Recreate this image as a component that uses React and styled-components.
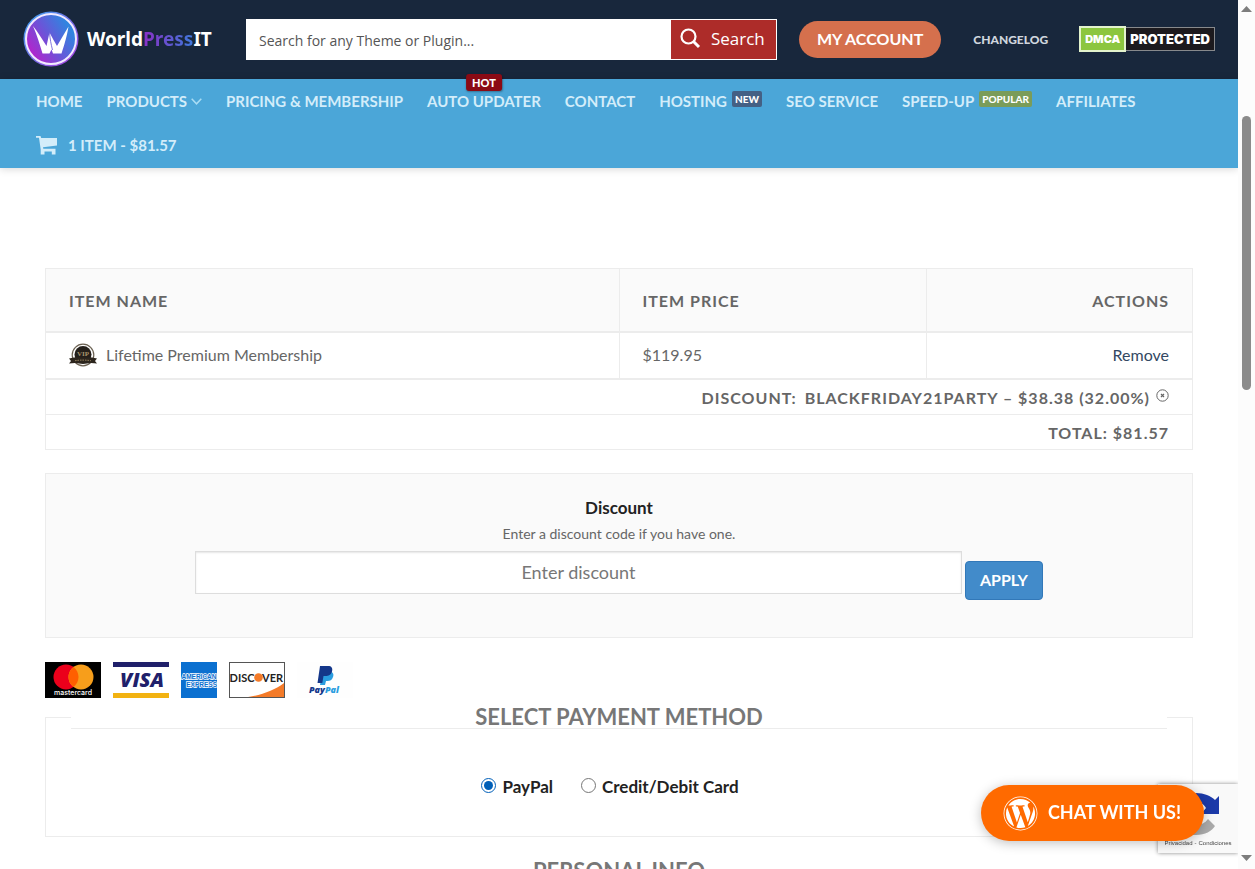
import React from 'react';
import styled, { createGlobalStyle } from 'styled-components';
import { FaWordpress } from 'react-icons/fa';

const GlobalStyle = createGlobalStyle`
  *, *::before, *::after { box-sizing: border-box; }
  html, body { margin: 0; padding: 0; }
  body {
    background: #fff;
    color: #666;
    font-family: Lato, "Liberation Sans", sans-serif;
    font-size: 16px;
    line-height: 24px;
  }
  a { text-decoration: none; color: inherit; }
  button, input { font-family: inherit; }
`;

const Window = styled.div`
  display: grid;
  grid-template-columns: minmax(0, 1fr) 17px;
  height: 100vh;
  overflow: hidden;
`;

const Page = styled.div`
  min-width: 0;
  overflow: hidden;
`;

const ScrollTrack = styled.div`
  display: flex;
  flex-direction: column;
  align-items: center;
  padding: 6px 0 8px;
  background: #fcfcfc;
`;

const ScrollThumb = styled.div`
  width: 9px;
  height: 274px;
  margin-top: 104px;
  margin-bottom: auto;
  border-radius: 5px;
  background: #8b8b8b;
`;

/* Header */
const TopBar = styled.header`
  display: flex;
  align-items: center;
  height: 79px;
  padding: 0 23px;
  background: #18273c;
`;

const LogoLink = styled.a`
  display: flex;
  align-items: center;
  gap: 8px;
  width: 223px;
  padding-bottom: 2px;
  color: #fff;
  font-family: "Noto Sans", "Open Sans", sans-serif;
  font-size: 19px;
  font-weight: 700;
`;

const LogoAccent = styled.span`
  background: linear-gradient(90deg, #8a2fc4, #3f78dc);
  background-clip: text;
  color: transparent;
`;

const SearchForm = styled.form`
  display: flex;
  flex: 1;
  height: 41px;
  background: #fff;
`;

const SearchInput = styled.input`
  flex: 1;
  min-width: 0;
  padding: 2px 13px 0;
  border: 0;
  background: #fff;
  font-family: "Open Sans", sans-serif;
  font-size: 14px;
  color: #444;
  &::placeholder { color: #555; opacity: 1; }
`;

const SearchButton = styled.button`
  display: flex;
  align-items: center;
  gap: 10px;
  width: 107px;
  padding: 0 9px 2px;
  border: 1px solid #fff;
  background: #ad2c29;
  color: #fff;
  font-family: "Open Sans", sans-serif;
  font-size: 17px;
`;

const AccountButton = styled.a`
  display: flex;
  align-items: center;
  height: 37px;
  margin-left: 22px;
  padding: 0 18px 1px;
  border-radius: 19px;
  background: #d5704d;
  color: #fff;
  font-size: 16px;
  font-weight: 700;
`;

const TopLink = styled.a`
  margin: 0 31px 0 32px;
  color: #cfd6de;
  font-size: 12px;
  font-weight: 900;
`;

const DmcaBadge = styled.a`
  display: flex;
  align-items: center;
  padding-bottom: 2px;
  color: #fff;
  font-family: Inter, sans-serif;
  font-weight: 900;
`;

const DmcaName = styled.span`
  display: flex;
  align-items: center;
  height: 26px;
  padding: 0 4px;
  border: 2px solid #e3f3cd;
  background: #8cc63f;
  font-size: 11px;
`;

const DmcaStatus = styled.span`
  display: flex;
  align-items: center;
  height: 24px;
  padding: 0 4px;
  border: 1px solid #87898c;
  border-left: 0;
  background: #1c1a1e;
  font-size: 13px;
`;

const NavBar = styled.nav`
  display: flex;
  flex-wrap: wrap;
  column-gap: 24px;
  padding: 0 36px 1px;
  background: #4ba6d8;
  box-shadow: 0 1px 8px rgba(0, 0, 0, 0.16);
`;

const NavLink = styled.a`
  position: relative;
  display: flex;
  align-items: center;
  height: 44px;
  color: #d3edfa;
  font-size: 15px;
  font-weight: 700;
`;

const Badge = styled.span`
  margin: 0 0 5px 5px;
  padding: 0 3px;
  border-radius: 2px;
  background: ${(p) => p.$color};
  color: #fff;
  font-size: 10px;
  font-weight: 900;
  line-height: 16px;
`;

const HotBadge = styled.span`
  position: absolute;
  top: -5px;
  left: 50%;
  transform: translateX(-50%);
  padding: 0 6px;
  border-radius: 3px;
  background: #8b0a14;
  box-shadow: 0 1px 2px rgba(0, 0, 0, 0.3);
  color: #fff;
  font-size: 11px;
  font-weight: 900;
  line-height: 17px;
`;

/* Checkout */
const Main = styled.main`
  padding: 100px 45px 0;
`;

const CartTable = styled.table`
  width: 100%;
  border-collapse: collapse;
  table-layout: fixed;
  border: 1px solid #ececec;
`;

const HeadCell = styled.th`
  width: ${(p) => p.$width};
  height: 63px;
  padding: 3px 23px 0;
  border: 1px solid #ececec;
  border-bottom-width: 2px;
  background: #fafafa;
  font-weight: 700;
  letter-spacing: 1px;
  text-align: ${(p) => p.$align || 'left'};
`;

const Cell = styled.td`
  height: 47px;
  padding: 0 23px;
  border: 1px solid #ececec;
  border-bottom-width: 2px;
  text-align: ${(p) => p.$align || 'left'};
`;

const SummaryCell = styled.th`
  height: ${(p) => (p.$total ? '35px' : '36px')};
  padding: 2px 23px 0;
  border: 1px solid #ececec;
  font-weight: 700;
  letter-spacing: 1px;
  text-align: right;
`;

const Product = styled.div`
  display: flex;
  align-items: center;
  gap: 9px;
`;

const RemoveLink = styled.a`
  color: #334862;
`;

const DropCoupon = styled.a`
  display: inline-flex;
  vertical-align: 2px;
`;

const CouponCode = styled.span`
  margin: 0 6px 0 8px;
`;

const DiscountBox = styled.form`
  display: flex;
  flex-direction: column;
  align-items: center;
  margin: 23px 0 24px;
  padding: 21px 24px 37px;
  border: 1px solid #ececec;
  background: #fafafa;
`;

const DiscountLabel = styled.label`
  color: #222;
  font-size: 17px;
  font-weight: 700;
  line-height: 26px;
`;

const DiscountHint = styled.span`
  font-size: 14px;
  line-height: 26px;
`;

const DiscountRow = styled.div`
  display: flex;
  gap: 3px;
  width: 100%;
  padding: 4px 125px 0;
`;

const DiscountInput = styled.input`
  flex: 1;
  min-width: 0;
  height: 43px;
  padding: 0 2px 2px;
  border: 1px solid #ddd;
  background: #fff;
  box-shadow: inset 0 1px 2px rgba(0, 0, 0, 0.1);
  color: #333;
  font-size: 18px;
  text-align: center;
  &::placeholder { color: #777; opacity: 1; }
`;

const ApplyButton = styled.button`
  height: 39px;
  margin-top: 10px;
  padding: 0 14px 2px;
  border: 1px solid #3278b8;
  border-radius: 4px;
  background: #428bca;
  color: #fff;
  font-size: 16px;
  font-weight: 700;
`;

const CardRow = styled.div`
  display: flex;
  gap: 12px;
  height: 36px;
  margin-bottom: 7px;
`;

const Section = styled.fieldset`
  min-width: 0;
  margin: 0 0 22px;
  padding: 0 25px;
  border: 1px solid #ececec;
`;

const SectionTitle = styled.legend`
  width: 100%;
  padding: 0;
  border-bottom: 1px solid #ececec;
  color: #777;
  font-size: 22px;
  font-weight: 700;
  line-height: 23px;
  text-align: center;
`;

const MethodRow = styled.div`
  display: flex;
  justify-content: center;
  gap: 28px;
  padding: 45px 18px 36px 0;
`;

const Method = styled.label`
  display: flex;
  align-items: center;
  gap: 6px;
  color: #222;
  font-size: 17px;
  font-weight: 700;
  line-height: 26px;
`;

const MethodRadio = styled.input`
  width: 15px;
  height: 15px;
  margin: 0 0 3px;
  accent-color: #005fb8;
`;

/* Floating widgets */
const CaptchaBadge = styled.aside`
  position: fixed;
  right: 17px;
  bottom: 16px;
  display: flex;
  flex-direction: column;
  justify-content: space-between;
  width: 80px;
  height: 69px;
  padding: 7px 6px 4px;
  background: #f9f9f9;
  box-shadow: 0 0 4px #888;
  clip-path: inset(-6px 0 -6px -6px);
  color: #444;
  font-family: "Liberation Sans", sans-serif;
  font-size: 6px;
  line-height: 12px;
  white-space: nowrap;
`;

const CaptchaLinks = styled.div`
  display: flex;
  justify-content: center;
  gap: 2px;
`;

const ChatButton = styled.button`
  position: fixed;
  right: 51px;
  bottom: 28px;
  display: flex;
  align-items: center;
  gap: 10px;
  height: 56px;
  padding: 0 23px 0 22px;
  border: 0;
  border-radius: 28px;
  background: #ff6a00;
  box-shadow: 0 2px 12px rgba(0, 0, 0, 0.25);
  color: #fff;
  font-size: 18px;
  font-weight: 700;
`;

const ChatLabel = styled.span`
  padding-bottom: 2px;
`;

function LogoMark() {
  return (
    <svg width="56" height="56" viewBox="0 0 56 56" aria-hidden="true">
      <defs>
        <linearGradient id="disc" x1="0.1" y1="0.8" x2="0.9" y2="0.3">
          <stop offset="0" stopColor="#b324cc" />
          <stop offset="0.5" stopColor="#6a55d8" />
          <stop offset="1" stopColor="#2f86e0" />
        </linearGradient>
        <linearGradient id="rim" x1="0" y1="0" x2="1" y2="1">
          <stop offset="0" stopColor="#35a5ee" />
          <stop offset="1" stopColor="#b03be0" />
        </linearGradient>
      </defs>
      <circle cx="28" cy="28" r="27.5" fill="url(#rim)" />
      <circle cx="28" cy="28" r="25" fill="url(#disc)" stroke="#f1e9ff" strokeWidth="2" />
      <path d="M10 15C15 21 19 28 23.500 35L26.500 21.500C29 26 31.500 31 34 35L45.500 15.500C44 25 41 35 38.500 42.500H30L28.500 38.500 26.500 42.500H19.500C17 34 14 24 10 15Z" fill="#fff" />
      <path d="M26.500 21.500C27 28 28 33 29.500 39" stroke="#6250d5" strokeWidth="0.800" fill="none" />
    </svg>
  );
}

function SearchIcon() {
  return (
    <svg width="21" height="21" viewBox="0 0 21 21" fill="none" stroke="#fff" aria-hidden="true">
      <circle cx="8.500" cy="8.500" r="7" strokeWidth="2.200" />
      <path d="M13.500 13.500L19 19" strokeWidth="3" />
    </svg>
  );
}

const CartSvg = styled.svg`
  margin-right: 11px;
`;

function CartIcon() {
  return (
    <CartSvg width="21" height="19" viewBox="0 0 21 19" fill="#d3edfa" aria-hidden="true">
      <path d="M0 0H4.500L5.200 2H21V9.500L7 11.300 7.300 12.800H19.500V18.500H15.800V15.500H8.500V18.500H4.700V13.500L3 1.800H0Z" />
    </CartSvg>
  );
}

const ChevronSvg = styled.svg`
  margin-left: 4px;
`;

function Chevron() {
  return (
    <ChevronSvg width="11" height="7" viewBox="0 0 11 7" fill="none" stroke="#a9dcf4" strokeWidth="1.500" aria-hidden="true">
      <path d="M.7.800L5.500 5.800 10.300.800" />
    </ChevronSvg>
  );
}

function Arrow({ down }) {
  return (
    <svg width="11" height="6" viewBox="0 0 11 6" fill="#7d7d7d" aria-hidden="true">
      <path d={down ? 'M0 0H11L5.500 6Z' : 'M0 6H11L5.500 0Z'} />
    </svg>
  );
}

function VipSeal() {
  return (
    <svg width="28" height="24" viewBox="0 0 28 24" aria-hidden="true">
      <circle cx="14" cy="12" r="10.800" fill="#fff" stroke="#6b6152" strokeWidth="1.200" />
      <circle cx="14" cy="11.500" r="8.500" fill="#241f1a" />
      <path d="M0 15.500L5 14.500H23L28 15.500 26 18 28 20.500 22 20 14 21 6 20 0 20.500 2 18Z" fill="#2c251d" />
      <path d="M6 17.700Q14 16.500 22 17.700" stroke="#a08c66" strokeDasharray="1.500 1" fill="none" />
      <text x="14" y="12.500" textAnchor="middle" fontFamily="Liberation Serif, serif" fontWeight="700" fontSize="7" fill="#a8946c">VIP</text>
    </svg>
  );
}

function CouponIcon() {
  return (
    <svg width="13" height="13" viewBox="0 0 13 13" fill="none" stroke="#666" aria-hidden="true">
      <circle cx="6.500" cy="6.500" r="5.700" />
      <path d="M5 5L8 8M8 5L5 8" strokeWidth="1.200" />
    </svg>
  );
}

function Mastercard() {
  return (
    <svg width="56" height="36" viewBox="0 0 56 36" role="img" aria-label="Mastercard">
      <rect width="56" height="36" fill="#000" />
      <circle cx="21" cy="15" r="12.500" fill="#eb001b" />
      <circle cx="36" cy="15" r="12.500" fill="#f79e1b" />
      <path d="M28.500 5A12.500 12.500 0 0 1 28.500 25A12.500 12.500 0 0 1 28.500 5Z" fill="#ff5f00" />
      <text x="28" y="33" textAnchor="middle" fontFamily="Inter, sans-serif" fontWeight="500" fontSize="7" fill="#fff">mastercard</text>
    </svg>
  );
}

function Visa() {
  return (
    <svg width="56" height="36" viewBox="0 0 56 36" role="img" aria-label="Visa">
      <rect width="56" height="36" fill="#fff" />
      <rect width="56" height="5" fill="#20206a" />
      <rect y="31" width="56" height="5" fill="#f2b211" />
      <text x="29" y="25" textAnchor="middle" fontFamily="Open Sans, sans-serif" fontWeight="800" fontStyle="italic" fontSize="20" fill="#20206a">VISA</text>
    </svg>
  );
}

function Amex() {
  return (
    <svg width="36" height="36" viewBox="0 0 36 36" role="img" aria-label="American Express">
      <rect width="36" height="36" fill="#0b70d0" />
      <g fontFamily="Liberation Sans, sans-serif" fontWeight="700" fontSize="6.500" fill="#0b70d0" stroke="#fff" strokeWidth="1.300" paintOrder="stroke">
        <text x="18" y="17" textAnchor="middle">AMERICAN</text>
        <text x="36" y="25" textAnchor="end">EXPRESS</text>
      </g>
    </svg>
  );
}

function Discover() {
  return (
    <svg width="56" height="36" viewBox="0 0 56 36" role="img" aria-label="Discover">
      <rect x="0.500" y="0.500" width="55" height="35" fill="#fff" stroke="#555" />
      <path d="M55 21C46 28 33 33 19 35H55Z" fill="#f47b29" />
      <circle cx="29.500" cy="15.500" r="4.300" fill="#f47b29" />
      <g fontFamily="Lato, sans-serif" fontWeight="700" fontSize="11" fill="#222">
        <text x="25.500" y="19.500" textAnchor="end">DISC</text>
        <text x="33" y="19.500">VER</text>
      </g>
    </svg>
  );
}

function PayPal() {
  return (
    <svg width="56" height="36" viewBox="0 0 56 36" role="img" aria-label="PayPal">
      <rect width="56" height="36" fill="#fefefe" />
      <path d="M25.500 10H33C36 10 37 12 36 15 35 18 33 19 30.500 19H29L28 23H23Z" fill="#2a9de0" />
      <path d="M23 4H31C34.500 4 36 6 35 9.500 34 13 31.500 14 28.500 14H26.500L25.300 21H20.500Z" fill="#14378a" />
      <g fontFamily="Open Sans, sans-serif" fontWeight="800" fontStyle="italic" fontSize="9">
        <text x="12" y="31" fill="#14378a">Pay<tspan fill="#2a9de0">Pal</tspan></text>
      </g>
    </svg>
  );
}

const CaptchaSvg = styled.svg`
  margin-left: 7px;
`;

function CaptchaMark() {
  return (
    <CaptchaSvg width="50" height="46" viewBox="0 0 50 46" aria-hidden="true">
      <path d="M25 2C33 2 40 5 44 9L48 5V23H30L35 17C32 12 29 11 25 11Z" fill="#1c3aa9" />
      <path d="M25 2C13 3 4 11 3 23H12C13 17 18 12 25 11Z" fill="#4285f4" />
      <path d="M3 23C3 36 13 44 25 44 34 44 41 40 44 35L37 28C34 32 30 34 25 34 18 34 13 30 12 23Z" fill="#ababab" />
    </CaptchaSvg>
  );
}

export default function App() {
  return (
    <Window>
      <GlobalStyle />
      <Page>
        <TopBar>
          <LogoLink href="#home">
            <LogoMark />
            <span>World<LogoAccent>Press</LogoAccent>IT</span>
          </LogoLink>
          <SearchForm role="search">
            <SearchInput type="text" aria-label="Search" placeholder="Search for any Theme or Plugin..." />
            <SearchButton type="button"><SearchIcon />Search</SearchButton>
          </SearchForm>
          <AccountButton href="#account">MY ACCOUNT</AccountButton>
          <TopLink href="#changelog">CHANGELOG</TopLink>
          <DmcaBadge href="#dmca">
            <DmcaName>DMCA</DmcaName>
            <DmcaStatus>PROTECTED</DmcaStatus>
          </DmcaBadge>
        </TopBar>
        <NavBar>
          <NavLink href="#home">HOME</NavLink>
          <NavLink href="#products">PRODUCTS<Chevron /></NavLink>
          <NavLink href="#pricing">PRICING &amp; MEMBERSHIP</NavLink>
          <NavLink href="#updater">AUTO UPDATER<HotBadge>HOT</HotBadge></NavLink>
          <NavLink href="#contact">CONTACT</NavLink>
          <NavLink href="#hosting">HOSTING<Badge $color="#446084">NEW</Badge></NavLink>
          <NavLink href="#seo">SEO SERVICE</NavLink>
          <NavLink href="#speed">SPEED-UP<Badge $color="#7a9c59">POPULAR</Badge></NavLink>
          <NavLink href="#affiliates">AFFILIATES</NavLink>
          <NavLink href="#cart"><CartIcon />1 ITEM - $81.57</NavLink>
        </NavBar>

        <Main>
          <CartTable>
            <thead>
              <tr>
                <HeadCell scope="col" $width="50%">ITEM NAME</HeadCell>
                <HeadCell scope="col" $width="26.8%">ITEM PRICE</HeadCell>
                <HeadCell scope="col" $width="23.2%" $align="right">ACTIONS</HeadCell>
              </tr>
            </thead>
            <tbody>
              <tr>
                <Cell><Product><VipSeal />Lifetime Premium Membership</Product></Cell>
                <Cell>$119.95</Cell>
                <Cell $align="right"><RemoveLink href="#remove">Remove</RemoveLink></Cell>
              </tr>
            </tbody>
            <tfoot>
              <tr>
                <SummaryCell colSpan={3}>
                  DISCOUNT:<CouponCode>BLACKFRIDAY21PARTY – $38.38 (32.00%)</CouponCode>
                  <DropCoupon href="#coupon" aria-label="Remove discount"><CouponIcon /></DropCoupon>
                </SummaryCell>
              </tr>
              <tr>
                <SummaryCell colSpan={3} $total>TOTAL: $81.57</SummaryCell>
              </tr>
            </tfoot>
          </CartTable>

          <DiscountBox>
            <DiscountLabel htmlFor="discount">Discount</DiscountLabel>
            <DiscountHint>Enter a discount code if you have one.</DiscountHint>
            <DiscountRow>
              <DiscountInput id="discount" type="text" placeholder="Enter discount" />
              <ApplyButton type="button">APPLY</ApplyButton>
            </DiscountRow>
          </DiscountBox>

          <CardRow>
            <Mastercard />
            <Visa />
            <Amex />
            <Discover />
            <PayPal />
          </CardRow>

          <Section>
            <SectionTitle>SELECT PAYMENT METHOD</SectionTitle>
            <MethodRow>
              <Method><MethodRadio type="radio" name="method" defaultChecked />PayPal</Method>
              <Method><MethodRadio type="radio" name="method" />Credit/Debit Card</Method>
            </MethodRow>
          </Section>

          <Section>
            <SectionTitle>PERSONAL INFO</SectionTitle>
          </Section>
        </Main>
      </Page>

      <ScrollTrack aria-hidden="true">
        <Arrow />
        <ScrollThumb />
        <Arrow down />
      </ScrollTrack>

      <CaptchaBadge>
        <CaptchaMark />
        <CaptchaLinks>
          <a href="#privacy">Privacidad</a>
          <span>-</span>
          <a href="#terms">Condiciones</a>
        </CaptchaLinks>
      </CaptchaBadge>
      <ChatButton type="button"><FaWordpress size={35} /><ChatLabel>CHAT WITH US!</ChatLabel></ChatButton>
    </Window>
  );
}
